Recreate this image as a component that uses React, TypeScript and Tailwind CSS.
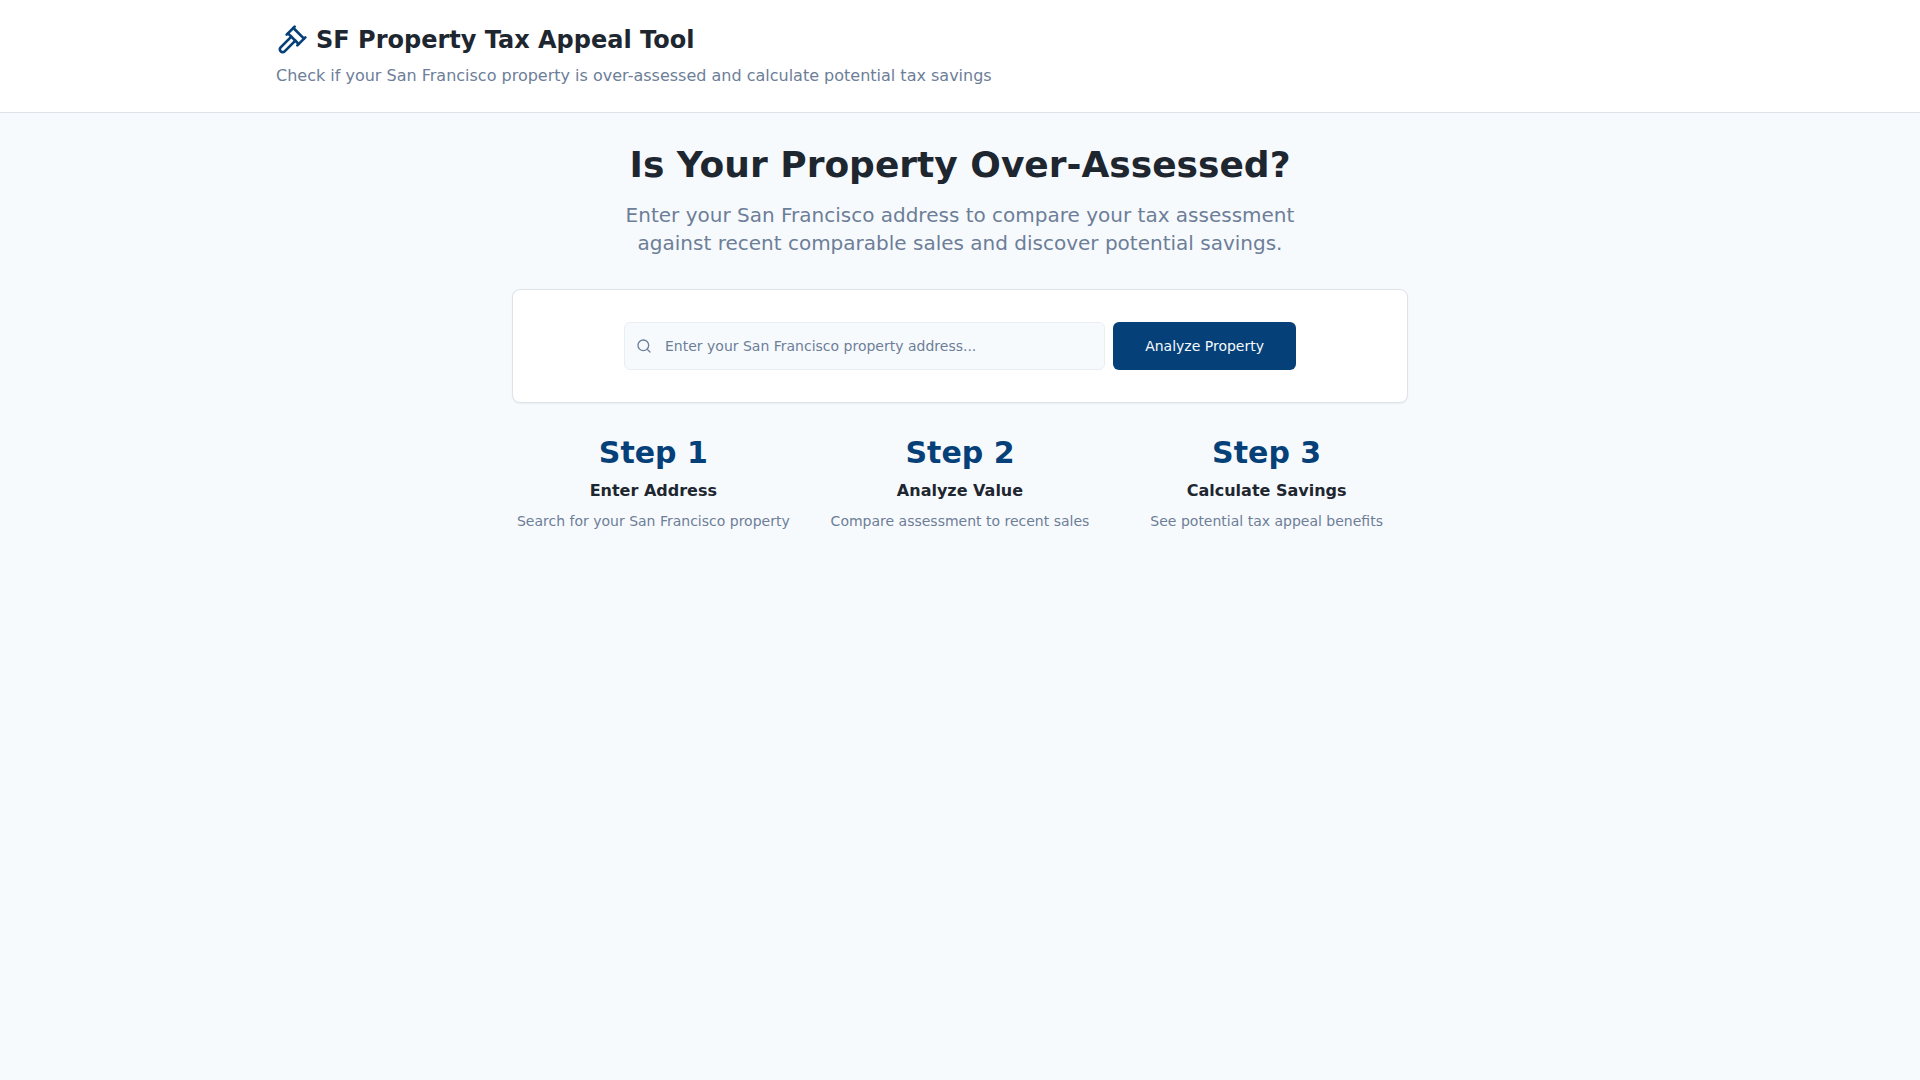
import { useState } from "react"
import { Search } from "lucide-react"

const steps = [
    { label: "Step 1", title: "Enter Address", text: "Search for your San Francisco property" },
    { label: "Step 2", title: "Analyze Value", text: "Compare assessment to recent sales" },
    { label: "Step 3", title: "Calculate Savings", text: "See potential tax appeal benefits" },
]

function GavelIcon() {
    return (
        <svg
            className="h-8 w-8 text-[#054078]"
            viewBox="0 0 24 24"
            fill="none"
            stroke="currentColor"
            strokeWidth="2"
            strokeLinecap="round"
            strokeLinejoin="round"
            aria-hidden="true"
        >
            <path d="m14.5 12.5-8 8a2.119 2.119 0 1 1-3-3l8-8" />
            <path d="m16 16 6-6" />
            <path d="m8 8 6-6" />
            <path d="m9 7 8 8" />
            <path d="m21 11-8-8" />
        </svg>
    )
}

function Header() {
    return (
        <header className="border-b border-[#dde3e9] bg-white">
            <div className="mx-auto max-w-[1400px] px-4 py-6">
                <div className="flex items-center gap-2">
                    <GavelIcon />
                    <h1 className="text-2xl font-bold">SF Property Tax Appeal Tool</h1>
                </div>
                <p className="mt-2 text-[#6d7e98]">
                    Check if your San Francisco property is over-assessed and calculate potential tax savings
                </p>
            </div>
        </header>
    )
}

function AddressForm() {
    const [address, setAddress] = useState("")

    return (
        <form
            className="mx-auto flex max-w-2xl gap-2"
            onSubmit={(e) => e.preventDefault()}
        >
            <div className="relative flex-1">
                <Search className="absolute top-4 left-3 h-4 w-4 text-[#6d7e98]" />
                <input
                    type="text"
                    aria-label="Property address"
                    value={address}
                    onChange={(e) => setAddress(e.target.value)}
                    placeholder="Enter your San Francisco property address..."
                    className="h-12 w-full rounded-md border border-[#e9eef3] bg-[#f7fafd] pr-3 pl-10 text-sm placeholder:text-[#6d7e98]"
                />
            </div>
            <button
                type="submit"
                className="h-12 rounded-md bg-[#054078] px-8 text-sm font-medium text-[#f7fafd]"
            >
                Analyze Property
            </button>
        </form>
    )
}

export default function App() {
    return (
        <div className="min-h-screen bg-[#f7fafd] font-['DejaVu_Sans',sans-serif] text-[#1e2630]">
            <Header />
            <main className="mx-auto max-w-[1400px] px-4 py-8">
                <div className="mx-auto max-w-4xl text-center">
                    <h2 className="mb-4 text-4xl font-bold">Is Your Property Over-Assessed?</h2>
                    <p className="mx-auto mb-8 max-w-2xl text-xl text-[#6d7e98]">
                        Enter your San Francisco address to compare your tax assessment
                        against recent comparable sales and discover potential savings.
                    </p>

                    <div className="mb-8 rounded-lg border border-[#dde3e9] bg-white p-8 text-left shadow-xs">
                        <AddressForm />
                    </div>

                    {/* How it works */}
                    <div className="grid gap-6 md:grid-cols-3">
                        {steps.map((step) => (
                            <div key={step.label}>
                                <div className="mb-2 text-3xl font-bold text-[#054078]">{step.label}</div>
                                <h3 className="mb-2 font-semibold">{step.title}</h3>
                                <p className="text-sm text-[#6d7e98]">{step.text}</p>
                            </div>
                        ))}
                    </div>
                </div>
            </main>
        </div>
    )
}
